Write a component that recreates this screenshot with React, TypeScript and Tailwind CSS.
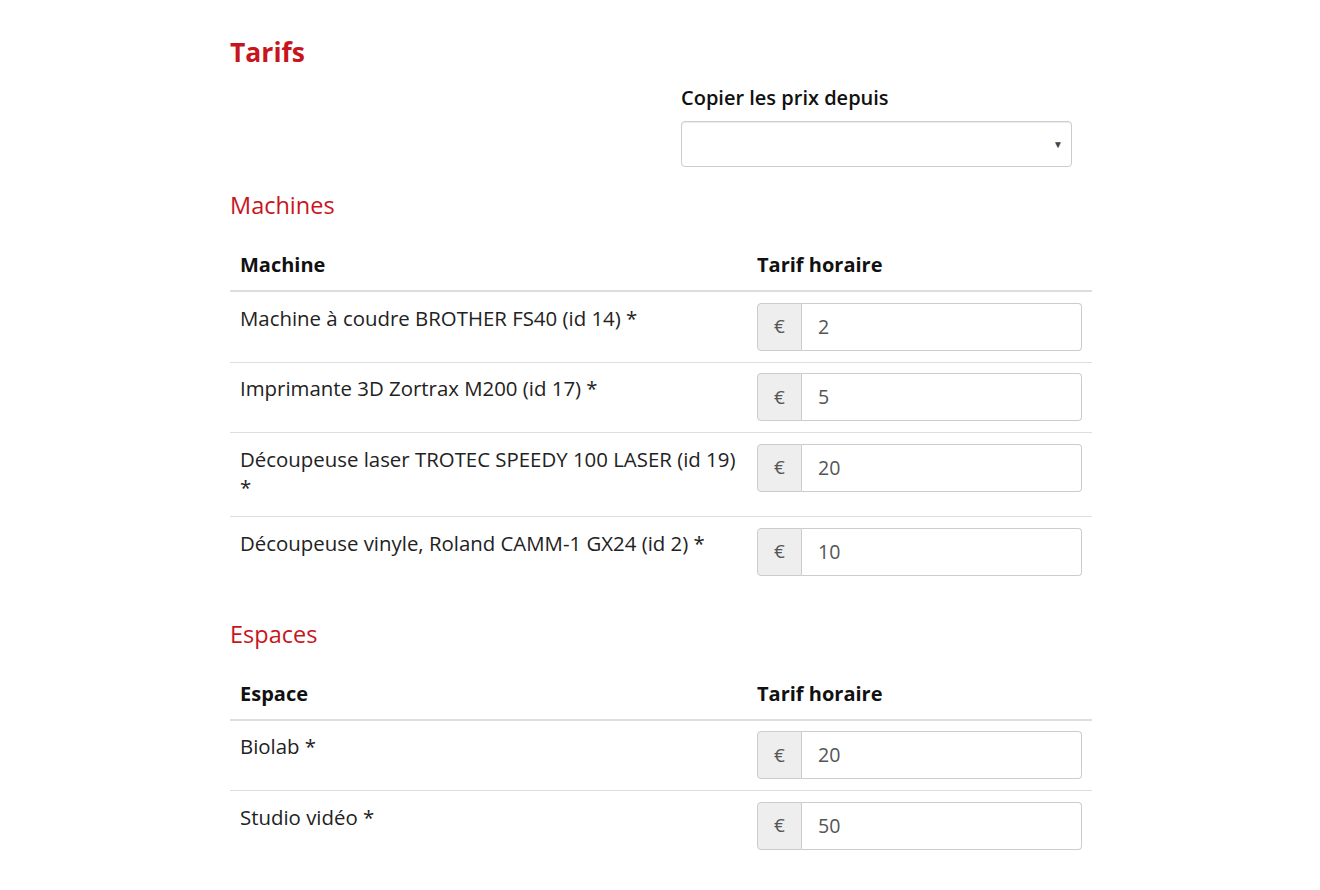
import React from "react";

const machines = [
  { name: "Machine à coudre BROTHER FS40 (id 14) *", price: "2" },
  { name: "Imprimante 3D Zortrax M200 (id 17) *", price: "5" },
  { name: "Découpeuse laser TROTEC SPEEDY 100 LASER (id 19) *", price: "20" },
  { name: "Découpeuse vinyle, Roland CAMM-1 GX24 (id 2) *", price: "10" },
];

const spaces = [
  { name: "Biolab *", price: "20" },
  { name: "Studio vidéo *", price: "50" },
];

function PriceInput({ value }: { value: string }) {
  return (
    <div className="flex h-[48px] w-[325px]">
      <span className="flex w-[45px] shrink-0 items-center justify-center rounded-l-[4px] border border-[#cccccc] bg-[#eeeeee] text-[19px] text-[#555555]">
        €
      </span>
      <input
        defaultValue={value}
        className="min-w-0 flex-1 rounded-r-[4px] border border-l-0 border-[#cccccc] bg-white px-[16px] text-[19.6px] text-[#555555] outline-none"
      />
    </div>
  );
}

function PriceTable({ label, rows }: { label: string; rows: { name: string; price: string }[] }) {
  return (
    <table className="w-[862px] border-collapse">
      <thead>
        <tr className="border-b-2 border-[#dddddd]">
          <th className="w-[517px] px-[10px] pt-[9px] pb-[11px] text-left text-[20px] leading-[28px] font-bold text-[#111111]">
            {label}
          </th>
          <th className="px-[10px] pt-[9px] pb-[11px] text-left text-[20px] leading-[28px] font-bold text-[#111111]">
            Tarif horaire
          </th>
        </tr>
      </thead>
      <tbody>
        {rows.map((r, i) => (
          <tr key={r.name} className={i < rows.length - 1 ? "border-b border-[#dddddd]" : ""}>
            <td className="px-[10px] pt-[11.5px] pb-[15.5px] align-top text-[20.4px] leading-[28px] text-[#222222]">
              {r.name}
            </td>
            <td className="px-[10px] pt-[10.5px] pb-[11px] align-top">
              <PriceInput value={r.price} />
            </td>
          </tr>
        ))}
      </tbody>
    </table>
  );
}

export default function App() {
  return (
    <div className="min-h-screen bg-white" style={{ fontFamily: '"Open Sans", sans-serif' }}>
      <div className="ml-[230px] w-[862px] pt-[36px]">
        <h2 className="text-[26.5px] leading-[32px] font-bold text-[#c8151d]">Tarifs</h2>

        <div className="mt-[18px] ml-[451px] w-[391px]">
          <label className="block text-[20px] leading-[24px] font-semibold text-[#111111]">
            Copier les prix depuis
          </label>
          <div className="relative mt-[11px] h-[46px] rounded-[4px] border border-[#cccccc] bg-white shadow-[inset_0_1px_1px_rgba(0,0,0,0.075)]">
            <span className="absolute top-1/2 right-[8px] -translate-y-1/2 text-[10px] text-[#444444]">▼</span>
          </div>
        </div>

        <h3 className="mt-[24px] text-[23.5px] leading-[28px] text-[#c8151d]">Machines</h3>
        <div className="mt-[23px]">
          <PriceTable label="Machine" rows={machines} />
        </div>

        <h3 className="mt-[33px] text-[23.5px] leading-[28px] text-[#c8151d]">Espaces</h3>
        <div className="mt-[23px]">
          <PriceTable label="Espace" rows={spaces} />
        </div>
      </div>
    </div>
  );
}
